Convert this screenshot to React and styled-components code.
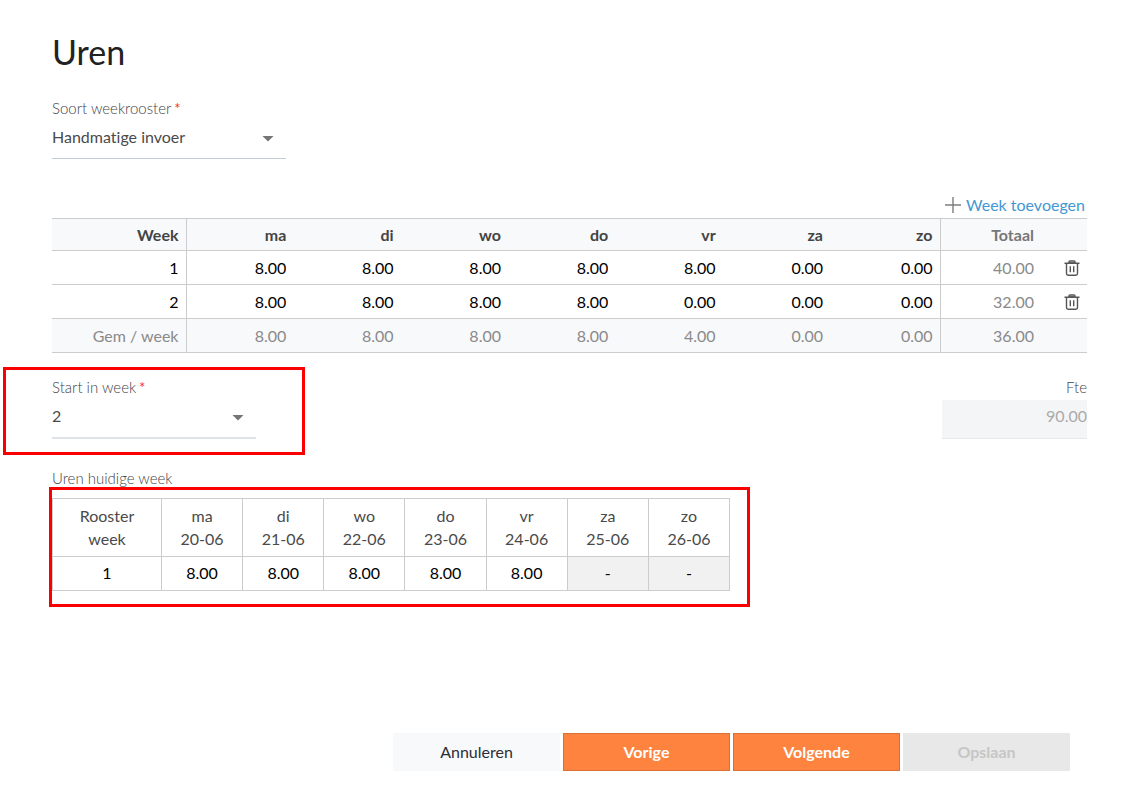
import { useState } from "react";
import styled, { createGlobalStyle } from "styled-components";

const GlobalStyle = createGlobalStyle`
  *, *::before, *::after {
    box-sizing: border-box;
  }

  body {
    margin: 0;
    background-color: #fff;
    font-family: Lato, "Open Sans", sans-serif;
    font-size: 16px;
    font-variant-ligatures: none;
    color: #4a4a4a;
  }

  input, select, button {
    font: inherit;
    font-variant-ligatures: none;
    color: inherit;
  }
`;

const Page = styled.main`
  padding: 32px 38px 16px 52px;
`;

const Title = styled.h1`
  margin: 0;
  font-size: 34px;
  font-weight: 400;
  line-height: 40px;
  color: #222;
`;

const Field = styled.div`
  width: ${({ $width }) => $width}px;
  text-align: ${({ $align }) => $align || "left"};
`;

const Label = styled.label`
  display: block;
  font-size: 15px;
  font-weight: 300;
  line-height: 24px;
  color: #444;
`;

const Required = styled.span`
  margin-left: 3px;
  font-weight: 400;
  color: #f4341f;
`;

const SelectBox = styled.div`
  display: grid;
  align-items: center;
  border-bottom: ${({ $thick }) => ($thick ? "2px solid #dfe3e8" : "1px solid #c3cbdc")};

  > * {
    grid-area: 1 / 1;
  }
`;

const Select = styled.select`
  appearance: none;
  width: 100%;
  height: 38px;
  padding: 0 32px 6px 0;
  border: 0;
  border-radius: 0;
  background: transparent;
`;

const Arrow = styled.svg`
  justify-self: end;
  margin-right: 12px;
  pointer-events: none;
  fill: #757575;
`;

const Toolbar = styled.div`
  display: flex;
  justify-content: flex-end;
  margin-top: 34px;
  padding: 0 2px 1px 0;
`;

const AddButton = styled.button`
  display: flex;
  align-items: center;
  gap: 5px;
  padding: 0;
  border: 0;
  background: none;
  line-height: 24px;
  color: #4398d3;
  cursor: pointer;
`;

const HoursTable = styled.table`
  width: 100%;
  table-layout: fixed;
  border-collapse: collapse;
  line-height: 24px;
`;

const HoursRow = styled.tr`
  height: ${({ $head }) => ($head ? 32 : 34)}px;
  border-top: 1px solid #ccc;
  border-bottom: 1px solid #ccc;
  background-color: ${({ $shaded }) => ($shaded ? "#f8f9fb" : "#fff")};
`;

const HoursHead = styled.th`
  padding: 0 7px 0 0;
  border-right: ${({ $divider }) => ($divider ? "1px solid #ccc" : "0")};
  font-weight: ${({ $plain }) => ($plain ? 400 : 700)};
  text-align: right;
  color: ${({ $tone }) => $tone || "#444"};
`;

const HoursCell = styled.td`
  padding: 0 7px 0 0;
  border-right: ${({ $divider }) => ($divider ? "1px solid #ccc" : "0")};
  text-align: right;
  color: ${({ $muted }) => ($muted ? "#8a8a8a" : "#000")};
`;

const HoursInput = styled.input`
  display: block;
  width: 100%;
  height: 24px;
  padding: 0;
  border: 0;
  background: transparent;
  text-align: ${({ $align }) => $align || "right"};
  color: #000;
`;

const IconButton = styled.button`
  display: block;
  margin-left: auto;
  padding: 0;
  border: 0;
  background: none;
  line-height: 0;
  cursor: pointer;
`;

const StartRow = styled.div`
  display: flex;
  justify-content: space-between;
  margin-top: 22px;
`;

const Highlight = styled.div`
  position: relative;

  &::after {
    content: "";
    position: absolute;
    inset: ${({ $inset }) => $inset};
    border: 3px solid #fb0000;
    pointer-events: none;
  }
`;

const FteInput = styled.input`
  display: block;
  width: 100%;
  height: 39px;
  margin-top: 1px;
  padding: 0 0 8px;
  border: 0;
  border-bottom: 1px solid #e6e8eb;
  background-color: #f4f5f7;
  text-align: right;
  color: #aaa;
`;

const CurrentWeek = styled.section`
  width: fit-content;
  margin-top: 27px;
`;

const SectionLabel = styled.h2`
  margin: 0 0 8px;
  font-size: 15px;
  font-weight: 300;
  line-height: 24px;
  color: #444;
`;

const WeekTable = styled.table`
  width: 678px;
  table-layout: fixed;
  border-collapse: collapse;
  text-align: center;
  line-height: 23px;
`;

const WeekHead = styled.th`
  height: 58px;
  padding: 0 24px 2px;
  border: 1px solid #ccc;
  font-weight: 400;
`;

const DayHead = styled(WeekHead)`
  padding: 0 8px 2px;
`;

const WeekCell = styled.td`
  height: 34px;
  padding: 0 0 2px;
  border: 1px solid #ccc;
  background-color: ${({ $closed }) => ($closed ? "#f1f1f1" : "#fff")};
  color: #000;
`;

const Footer = styled.footer`
  display: flex;
  justify-content: flex-end;
  gap: 3px;
  margin-top: 142px;
  padding-right: 17px;
`;

const buttonKinds = {
  plain: { background: "#f8f9fb", border: "#f8f9fb", color: "#2b2f36", weight: 400 },
  primary: { background: "#fd833f", border: "#db6f35", color: "#fff", weight: 700 },
  disabled: { background: "#e8e8e8", border: "#e8e8e8", color: "#c6c6c6", weight: 700 },
};

const Button = styled.button`
  width: 167px;
  height: 38px;
  padding: 0 0 2px;
  border: 1px solid ${({ $kind }) => buttonKinds[$kind].border};
  background-color: ${({ $kind }) => buttonKinds[$kind].background};
  font-weight: ${({ $kind }) => buttonKinds[$kind].weight};
  color: ${({ $kind }) => buttonKinds[$kind].color};
`;

const DAYS = ["ma", "di", "wo", "do", "vr", "za", "zo"];
const DATES = ["20-06", "21-06", "22-06", "23-06", "24-06", "25-06", "26-06"];

const WEEKS = [
  { week: 1, hours: ["8.00", "8.00", "8.00", "8.00", "8.00", "0.00", "0.00"], total: "40.00" },
  { week: 2, hours: ["8.00", "8.00", "8.00", "8.00", "0.00", "0.00", "0.00"], total: "32.00" },
];
const AVERAGE = ["8.00", "8.00", "8.00", "8.00", "4.00", "0.00", "0.00"];
const CURRENT = ["8.00", "8.00", "8.00", "8.00", "8.00", null, null];

const PlusIcon = () => (
  <svg width="16" height="16" viewBox="0 0 16 16" stroke="#7d7d7d" strokeWidth="1.4" aria-hidden="true">
    <path d="M8 0v16M0 8h16" />
  </svg>
);

const TrashIcon = () => (
  <svg width="16" height="16" viewBox="0 0 16 16" fill="none" stroke="#555" strokeWidth="1.4" aria-hidden="true">
    <path d="M0.5 3.2h15M5 2.8V1.8Q5 0.9 6 0.9h4q1 0 1 0.9v1" />
    <path d="M2.5 3.4v10.2q0 1.7 1.7 1.7h7.6q1.7 0 1.7-1.7V3.4" />
    <path d="M6.3 6.2v6M9.7 6.2v6" />
    <path d="M5.5 2.2h5" />
  </svg>
);

const SelectField = ({ id, label, width, options, initial, thick }) => {
  const [value, setValue] = useState(initial);

  return (
    <Field $width={width}>
      <Label htmlFor={id}>
        {label}
        <Required>*</Required>
      </Label>
      <SelectBox $thick={thick}>
        <Select id={id} value={value} onChange={(e) => setValue(e.target.value)}>
          {options.map((option) => (
            <option key={option}>{option}</option>
          ))}
        </Select>
        <Arrow width="12" height="6" viewBox="0 0 12 6" aria-hidden="true">
          <path d="M0.5 0h11L6 5.6z" />
        </Arrow>
      </SelectBox>
    </Field>
  );
};

const HoursGrid = () => (
  <HoursTable>
    <colgroup>
      <col width="134" />
      {DAYS.map((day) => (
        <col key={day} width={day === "zo" ? "110" : undefined} />
      ))}
      <col width="101" />
      <col width="46" />
    </colgroup>
    <thead>
      <HoursRow $head $shaded>
        <HoursHead scope="col" $divider>Week</HoursHead>
        {DAYS.map((day) => (
          <HoursHead key={day} scope="col" $divider={day === "zo"}>{day}</HoursHead>
        ))}
        <HoursHead scope="col" $tone="#777">Totaal</HoursHead>
        <HoursCell />
      </HoursRow>
    </thead>
    <tbody>
      {WEEKS.map(({ week, hours, total }) => (
        <HoursRow key={week}>
          <HoursHead scope="row" $divider $plain $tone="#000">{week}</HoursHead>
          {hours.map((value, i) => (
            <HoursCell key={DAYS[i]} $divider={i === 6}>
              <HoursInput defaultValue={value} aria-label={`Week ${week} ${DAYS[i]}`} />
            </HoursCell>
          ))}
          <HoursCell $muted>{total}</HoursCell>
          <HoursCell>
            <IconButton type="button" aria-label={`Week ${week} verwijderen`}>
              <TrashIcon />
            </IconButton>
          </HoursCell>
        </HoursRow>
      ))}
      <HoursRow $shaded>
        <HoursHead scope="row" $divider $plain $tone="#8a8a8a">Gem / week</HoursHead>
        {AVERAGE.map((value, i) => (
          <HoursCell key={DAYS[i]} $muted $divider={i === 6}>{value}</HoursCell>
        ))}
        <HoursCell $muted>36.00</HoursCell>
        <HoursCell />
      </HoursRow>
    </tbody>
  </HoursTable>
);

const CurrentWeekGrid = () => (
  <WeekTable>
    <colgroup>
      <col width="109" />
      {DAYS.map((day) => (
        <col key={day} />
      ))}
    </colgroup>
    <thead>
      <tr>
        <WeekHead scope="col">Rooster week</WeekHead>
        {DAYS.map((day, i) => (
          <DayHead key={day} scope="col">
            {day}
            <br />
            {DATES[i]}
          </DayHead>
        ))}
      </tr>
    </thead>
    <tbody>
      <tr>
        <WeekCell>1</WeekCell>
        {CURRENT.map((value, i) => (
          <WeekCell key={DAYS[i]} $closed={value === null}>
            {value === null ? (
              "-"
            ) : (
              <HoursInput $align="center" defaultValue={value} aria-label={`${DAYS[i]} ${DATES[i]}`} />
            )}
          </WeekCell>
        ))}
      </tr>
    </tbody>
  </WeekTable>
);

const TypeField = styled.div`
  margin-top: 24px;
`;

export default function App() {
  return (
    <>
      <GlobalStyle />
      <Page>
        <Title>Uren</Title>
        <TypeField>
          <SelectField
            id="soort"
            label="Soort weekrooster"
            width={234}
            options={["Handmatige invoer", "Standaard"]}
            initial="Handmatige invoer"
          />
        </TypeField>

        <Toolbar>
          <AddButton type="button">
            <PlusIcon />
            Week toevoegen
          </AddButton>
        </Toolbar>
        <HoursGrid />

        <StartRow>
          <Highlight $inset="-8px -49px -16px -49px">
            <SelectField id="start" label="Start in week" width={204} options={["1", "2"]} initial="2" thick />
          </Highlight>
          <Field $width={145} $align="right">
            <Label htmlFor="fte">Fte</Label>
            <FteInput id="fte" defaultValue="90.00" disabled />
          </Field>
        </StartRow>

        <CurrentWeek>
          <SectionLabel>Uren huidige week</SectionLabel>
          <Highlight $inset="-11px -20px -16px -3px">
            <CurrentWeekGrid />
          </Highlight>
        </CurrentWeek>

        <Footer>
          <Button type="button" $kind="plain">Annuleren</Button>
          <Button type="button" $kind="primary">Vorige</Button>
          <Button type="button" $kind="primary">Volgende</Button>
          <Button type="button" $kind="disabled" disabled>Opslaan</Button>
        </Footer>
      </Page>
    </>
  );
}
